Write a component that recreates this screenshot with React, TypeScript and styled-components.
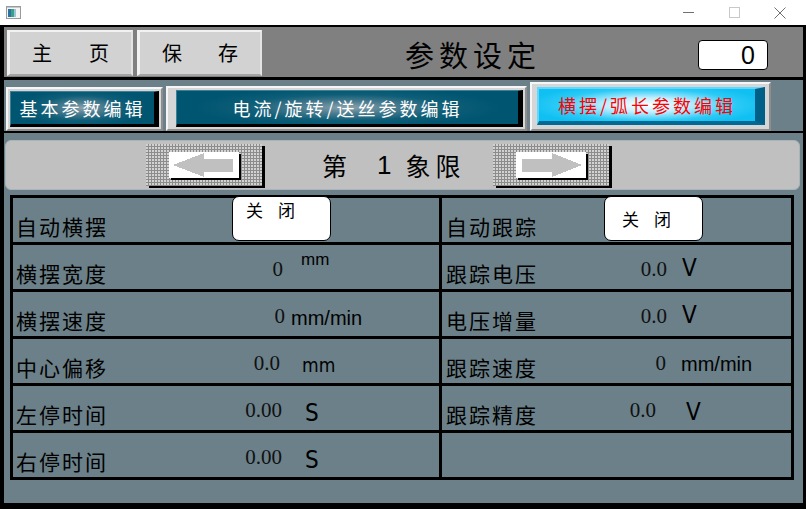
import React from 'react';
import styled, { createGlobalStyle, css } from 'styled-components';

const CJK = `"Noto Sans CJK SC", "Noto Sans CJK JP", sans-serif`;
const TEAL = '#6b8089';

const GlobalStyle = createGlobalStyle`
  html, body {
    margin: 0;
    padding: 0;
    background: #000;
  }
  body {
    font-family: ${CJK};
  }
  * {
    box-sizing: border-box;
  }
`;

const Window = styled.div`
  width: 806px;
  height: 509px;
  display: flex;
  flex-direction: column;
  background: #fff;
  overflow: hidden;
`;

const TitleBar = styled.div`
  height: 27px;
  flex: none;
  display: flex;
  align-items: center;
  padding-left: 6px;
  background: #fff;
  border-bottom: 2px solid #000;
`;

const Controls = styled.div`
  margin-left: auto;
  margin-right: 3px;
  display: flex;
`;

const ControlBox = styled.div`
  width: 46px;
  height: 25px;
  display: flex;
  align-items: center;
  justify-content: center;
`;

const Frame = styled.div`
  flex: 1;
  display: flex;
  flex-direction: column;
  border-left: 4px solid #000;
  border-right: 3px solid #000;
  border-bottom: 6px solid #000;
`;

const Header = styled.div`
  height: 53px;
  flex: none;
  display: flex;
  align-items: flex-start;
  gap: 4px;
  padding: 3px 0 0 3px;
  background: #808080;
  border-bottom: 3px solid #000;
`;

const HeadButton = styled.button<{ $w: number }>`
  width: ${(p) => p.$w}px;
  height: 46px;
  display: flex;
  align-items: center;
  justify-content: space-between;
  padding: 0 22px 2px 22px;
  background: #d2d2d2;
  border-style: solid;
  border-width: 2px 2px 2px 3px;
  border-color: #f2f2f2 #e4e4e4 #a4a4a4 #f2f2f2;
  font-family: ${CJK};
  font-size: 20px;
  color: #000;
`;

const Title = styled.div`
  flex: 1;
  padding: 4px 14px 0 0;
  text-align: center;
  font-size: 29px;
  letter-spacing: 5px;
  line-height: 40px;
  color: #000;
`;

const NumberBox = styled.div`
  width: 70px;
  height: 30px;
  margin: 10px 35px 0 0;
  padding-right: 12px;
  background: #fff;
  border: 1px solid #000;
  border-radius: 4px;
  text-align: right;
  font-family: "Liberation Sans", Arial, sans-serif;
  font-size: 25px;
  line-height: 28px;
  color: #000;
`;

const Body = styled.div`
  flex: 1;
  display: flex;
  flex-direction: column;
  background: ${TEAL};
`;

const TabRow = styled.div`
  height: 53px;
  flex: none;
  display: flex;
  align-items: flex-end;
  gap: 3px;
  padding: 0 0 0 2px;
  border-bottom: 2px solid #000;
`;

const TabFrame = styled.div<{ $w: number; $h: number; $padL: number; $active?: boolean }>`
  width: ${(p) => p.$w}px;
  height: ${(p) => p.$h}px;
  display: flex;
  padding: ${(p) => (p.$active ? '3px 4px 4px' : '2px 2px 2px')};
  padding-left: ${(p) => p.$padL}px;
  background: #d6d6d6;
  border-style: solid;
  border-width: 2px;
  border-color: #f6f6f6 #8e8e8e #8e8e8e #f6f6f6;
`;

const TabFace = styled.div<{ $active?: boolean }>`
  flex: 1;
  display: flex;
  align-items: center;
  justify-content: center;
  font-size: 18px;
  letter-spacing: 3px;
  border-style: solid;
  ${(p) =>
    p.$active
      ? css`
          color: #ff0000;
          background: radial-gradient(ellipse 55% 65% at 50% 50%, #ffffff 0%, #bfefff 35%, #2ccaf6 75%, #10c0f2 100%);
          border-width: 2px 10px 4px 2px;
          border-color: #5ed8ff #005f86 #006a94 #5ed8ff;
        `
      : css`
          color: #fff;
          background: radial-gradient(ellipse 45% 60% at 50% 50%, #8aa2ac 0%, #4d7d90 30%, #0e5e78 65%, #005570 100%);
          border-width: 1px 5px 3px 1px;
          border-color: #3e7f96 #000 #000 #3e7f96;
        `}
`;

const PanelArea = styled.div`
  flex: none;
  padding: 7px 3px 0 1px;
`;

const Panel = styled.div`
  height: 50px;
  display: flex;
  align-items: center;
  padding-left: 140px;
  background: #c0c0c0;
  border: 1px solid #a9b4b8;
  border-radius: 6px;
`;

const ArrowButton = styled.button`
  width: 116px;
  height: 42px;
  display: flex;
  align-items: center;
  justify-content: center;
  padding: 0;
  border: none;
  background-color: #8c8c8c;
  background-image: radial-gradient(circle at 1px 1px, #d2d2d2 0.8px, transparent 1px);
  background-size: 3px 3px;
  box-shadow: 3px 2px 0 #000;
`;

const ArrowPlate = styled.div`
  width: 70px;
  height: 26px;
  display: flex;
  background: #fff;
  box-shadow: 2px 2px 0 #000;
`;

const Caption = styled.div`
  width: 231px;
  padding-left: 60px;
  display: flex;
  align-items: center;
  font-size: 25px;
  color: #000;
`;

const CaptionNum = styled.span`
  margin: 0 14px 0 30px;
  font-family: "Liberation Sans", Arial, sans-serif;
  font-size: 26px;
  line-height: 1;
`;

const CaptionTail = styled.span`
  letter-spacing: 5px;
`;

const Table = styled.div`
  margin: 5px 9px 0 6px;
  padding: 3px;
  display: grid;
  grid-template-columns: 426px 349px;
  grid-auto-rows: 44px;
  gap: 3px;
  background: #000;
`;

const Cell = styled.div<{ $pad: number }>`
  display: flex;
  align-items: flex-end;
  padding: 0 0 5px ${(p) => p.$pad}px;
  background: ${TEAL};
`;

const Label = styled.div<{ $w: number }>`
  width: ${(p) => p.$w}px;
  flex: none;
  font-size: 21px;
  letter-spacing: 2px;
  line-height: 1;
  color: #000;
`;

const Value = styled.div<{ $w: number; $right?: number }>`
  width: ${(p) => p.$w}px;
  flex: none;
  padding: 0 ${(p) => p.$right ?? 0}px 4px 0;
  text-align: right;
  font-family: "Liberation Serif", "Times New Roman", serif;
  font-size: 21px;
  line-height: 1;
  color: #111;
`;

const Unit = styled.div<{ $gap: number; $lift?: number; $size?: number; $narrow?: boolean }>`
  margin-left: ${(p) => p.$gap}px;
  padding-bottom: ${(p) => p.$lift ?? 3}px;
  font-family: ${(p) =>
    p.$narrow
      ? `"Liberation Sans Narrow", "DejaVu Sans Condensed", "Liberation Sans", sans-serif`
      : `"Liberation Sans", Arial, sans-serif`};
  font-size: ${(p) => p.$size ?? 20}px;
  line-height: 1;
  color: #000;
`;

const Toggle = styled.button<{ $gap: number; $pad: number; $top?: boolean }>`
  width: 99px;
  height: 45px;
  align-self: flex-start;
  margin: -2px 0 0 ${(p) => p.$gap}px;
  display: flex;
  align-items: ${(p) => (p.$top ? 'flex-start' : 'center')};
  padding: ${(p) => (p.$top ? '3px' : '0')} 0 0 ${(p) => p.$pad}px;
  background: #fff;
  border: 1px solid #000;
  border-radius: 7px;
  font-family: ${CJK};
  font-size: 17px;
  letter-spacing: 15px;
  line-height: 20px;
  color: #000;
`;

const AppIcon = () => (
  <svg width="15" height="13" viewBox="0 0 15 13" shapeRendering="crispEdges">
    <rect x="0.5" y="0.5" width="14" height="12" fill="#f4f4f4" stroke="#9a9a9a" />
    <rect x="2" y="3" width="3" height="8" fill="#2f6fa8" />
    <rect x="5" y="3" width="3" height="8" fill="#3aa08a" />
    <rect x="8" y="3" width="2" height="8" fill="#9fc4d8" />
    <rect x="1" y="1" width="13" height="1" fill="#c8c8c8" />
  </svg>
);

const LeftArrow = () => (
  <svg width="70" height="26" viewBox="0 0 70 26" shapeRendering="crispEdges">
    <polygon points="4,13 35,1 35,7 64,7 64,20 35,20 35,25" fill="#c0c0c0" />
  </svg>
);

const RightArrow = () => (
  <svg width="70" height="26" viewBox="0 0 70 26" shapeRendering="crispEdges">
    <polygon points="6,7 36,7 36,1 66,13 36,25 36,20 6,20" fill="#c0c0c0" />
  </svg>
);

export default function App() {
  return (
    <Window>
      <GlobalStyle />
      <TitleBar>
        <AppIcon />
        <Controls>
          <ControlBox>
            <svg width="11" height="11" viewBox="0 0 11 11" shapeRendering="crispEdges">
              <line x1="0" y1="5.5" x2="11" y2="5.5" stroke="#707070" strokeWidth="1" />
            </svg>
          </ControlBox>
          <ControlBox>
            <svg width="11" height="11" viewBox="0 0 11 11" shapeRendering="crispEdges">
              <rect x="0.5" y="0.5" width="10" height="10" fill="none" stroke="#c8c8c8" />
            </svg>
          </ControlBox>
          <ControlBox>
            <svg width="12" height="12" viewBox="0 0 12 12">
              <path d="M0.5 0.5 L11.5 11.5 M11.5 0.5 L0.5 11.5" stroke="#707070" strokeWidth="1" />
            </svg>
          </ControlBox>
        </Controls>
      </TitleBar>

      <Frame>
        <Header>
          <HeadButton $w={126}>
            <span>主</span>
            <span>页</span>
          </HeadButton>
          <HeadButton $w={125}>
            <span>保</span>
            <span>存</span>
          </HeadButton>
          <Title>参数设定</Title>
          <NumberBox>0</NumberBox>
        </Header>

        <Body>
          <TabRow>
            <TabFrame $w={157} $h={44} $padL={2}>
              <TabFace>基本参数编辑</TabFace>
            </TabFrame>
            <TabFrame $w={361} $h={45} $padL={8}>
              <TabFace>电流/旋转/送丝参数编辑</TabFace>
            </TabFrame>
            <TabFrame $w={241} $h={49} $padL={5} $active>
              <TabFace $active>横摆/弧长参数编辑</TabFace>
            </TabFrame>
          </TabRow>

          <PanelArea>
            <Panel>
              <ArrowButton>
                <ArrowPlate>
                  <LeftArrow />
                </ArrowPlate>
              </ArrowButton>
              <Caption>
                <span>第</span>
                <CaptionNum>1</CaptionNum>
                <CaptionTail>象限</CaptionTail>
              </Caption>
              <ArrowButton>
                <ArrowPlate>
                  <RightArrow />
                </ArrowPlate>
              </ArrowButton>
            </Panel>
          </PanelArea>

          <Table>
            <Cell $pad={3}>
              <Label $w={167}>自动横摆</Label>
              <Toggle $gap={49} $pad={13} $top>
                关闭
              </Toggle>
            </Cell>
            <Cell $pad={4}>
              <Label $w={151}>自动跟踪</Label>
              <Toggle $gap={7} $pad={17}>
                关闭
              </Toggle>
            </Cell>

            <Cell $pad={3}>
              <Label $w={167}>横摆宽度</Label>
              <Value $w={100}>0</Value>
              <Unit $gap={18} $lift={16} $size={17}>
                mm
              </Unit>
            </Cell>
            <Cell $pad={4}>
              <Label $w={151}>跟踪电压</Label>
              <Value $w={70}>0.0</Value>
              <Unit $gap={15} $lift={4} $size={24} $narrow>
                V
              </Unit>
            </Cell>

            <Cell $pad={3}>
              <Label $w={167}>横摆速度</Label>
              <Value $w={102}>0</Value>
              <Unit $gap={6} $lift={3}>
                mm/min
              </Unit>
            </Cell>
            <Cell $pad={4}>
              <Label $w={151}>电压增量</Label>
              <Value $w={70}>0.0</Value>
              <Unit $gap={15} $lift={4} $size={24} $narrow>
                V
              </Unit>
            </Cell>

            <Cell $pad={3}>
              <Label $w={167}>中心偏移</Label>
              <Value $w={97}>0.0</Value>
              <Unit $gap={22} $lift={3} $size={19} $narrow>
                mm
              </Unit>
            </Cell>
            <Cell $pad={4}>
              <Label $w={151}>跟踪速度</Label>
              <Value $w={69}>0</Value>
              <Unit $gap={15} $lift={4}>
                mm/min
              </Unit>
            </Cell>

            <Cell $pad={3}>
              <Label $w={167}>左停时间</Label>
              <Value $w={99}>0.00</Value>
              <Unit $gap={23} $lift={0} $size={24} $narrow>
                S
              </Unit>
            </Cell>
            <Cell $pad={4}>
              <Label $w={151}>跟踪精度</Label>
              <Value $w={70} $right={11}>
                0.0
              </Value>
              <Unit $gap={19} $lift={1} $size={24} $narrow>
                V
              </Unit>
            </Cell>

            <Cell $pad={3}>
              <Label $w={167}>右停时间</Label>
              <Value $w={99}>0.00</Value>
              <Unit $gap={23} $lift={0} $size={24} $narrow>
                S
              </Unit>
            </Cell>
            <Cell $pad={4} />
          </Table>
        </Body>
      </Frame>
    </Window>
  );
}
